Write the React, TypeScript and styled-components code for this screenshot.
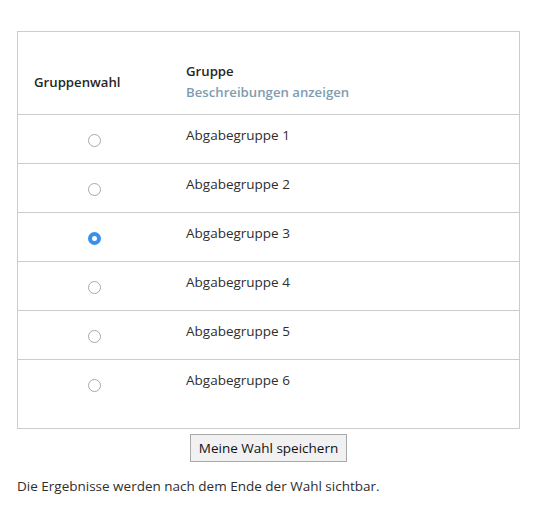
import React, { useState } from "react";
import styled, { createGlobalStyle } from "styled-components";

const Global = createGlobalStyle`
  html, body { margin: 0; padding: 0; background: #fff; }
  body { font-family: "Open Sans", "Noto Sans", sans-serif; color: #2e2e2e; font-size: 13.5px; }
`;

const Page = styled.div`
  padding: 31px 20px 0 17px;
  display: flex;
  flex-direction: column;
`;

const Table = styled.table`
  width: 503px;
  border-collapse: collapse;
  border: 1px solid #cccccc;
`;

const HeadCell = styled.th`
  text-align: left;
  font-weight: 650;
  font-size: 13.2px;
  padding: 29px 16px 11px;
  vertical-align: middle;
  line-height: 21px;
  color: #262626;
`;

const LinkText = styled.a`
  display: block;
  color: #7e9cb0;
  text-decoration: none;
  cursor: pointer;
`;

const Row = styled.tr<{ $last?: boolean }>`
  border-top: 1px solid #cccccc;
  height: ${(p) => (p.$last ? 69 : 49)}px;
`;

const RadioCell = styled.td`
  width: 120px;
  text-align: center;
  vertical-align: top;
  padding: 18px 16px 0;
`;

const NameCell = styled.td`
  vertical-align: top;
  padding: 11px 16px 0;
  line-height: 18px;
`;

const Radio = styled.span<{ $checked: boolean }>`
  display: inline-block;
  box-sizing: border-box;
  width: 13px;
  height: 13px;
  border-radius: 50%;
  border: ${(p) => (p.$checked ? "4px solid #3b8fe8" : "1px solid #a9a9a9")};
  background: #fff;
  cursor: pointer;
`;

const ButtonRow = styled.div`
  display: flex;
  justify-content: center;
  width: 503px;
  margin-top: 5px;
`;

const Button = styled.button`
  font-family: "Open Sans", "Noto Sans", sans-serif;
  font-size: 13.5px;
  color: #111;
  background: #f1f1f1;
  border: 1px solid #a8a8a8;
  height: 28px;
  padding: 0 8px;
`;

const Note = styled.p`
  margin: 14px 0 0;
  line-height: 20px;
`;

export default function App() {
  const [sel, setSel] = useState(3);
  const groups = [1, 2, 3, 4, 5, 6];
  return (
    <>
      <Global />
      <Page>
        <Table>
          <thead>
            <tr>
              <HeadCell>Gruppenwahl</HeadCell>
              <HeadCell>
                Gruppe
                <LinkText>Beschreibungen anzeigen</LinkText>
              </HeadCell>
            </tr>
          </thead>
          <tbody>
            {groups.map((g) => (
              <Row key={g} $last={g === 6}>
                <RadioCell>
                  <Radio $checked={sel === g} onClick={() => setSel(g)} />
                </RadioCell>
                <NameCell>Abgabegruppe {g}</NameCell>
              </Row>
            ))}
          </tbody>
        </Table>
        <ButtonRow>
          <Button>Meine Wahl speichern</Button>
        </ButtonRow>
        <Note>Die Ergebnisse werden nach dem Ende der Wahl sichtbar.</Note>
      </Page>
    </>
  );
}
